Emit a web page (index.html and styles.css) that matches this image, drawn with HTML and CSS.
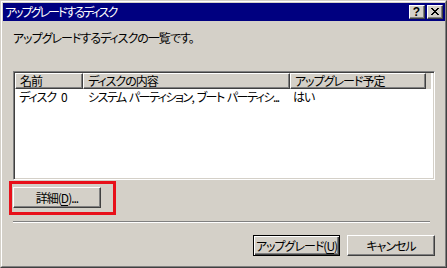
FILE: index.html
```html
<!DOCTYPE html>
<html lang="ja">
<head>
<meta charset="utf-8">
<link rel="stylesheet" href="styles.css">
</head>
<body>
<div class="window">
  <div class="titlebar">
    <span class="title">アップグレードするディスク</span>
    <div class="tbtns">
      <div class="tbtn help">?</div>
      <div class="tbtn">
        <svg width="8" height="7" viewBox="0 0 8 7"><path d="M0 0h2v1h1v1h2v-1h1v-1h2v1h-1v1h-1v1h-1v1h1v1h1v1h1v1h-2v-1h-1v-1h-2v1h-1v1h-2v-1h1v-1h1v-1h1v-1h-1v-1h-1v-1h-1z" fill="#000"/></svg>
      </div>
    </div>
  </div>
  <div class="content">
    <p class="desc">アップグレードするディスクの一覧です。</p>
    <div class="list">
      <div class="lhead">
        <div class="hc c1">名前</div>
        <div class="hc c2">ディスクの内容</div>
        <div class="hc c3">アップグレード予定</div>
      </div>
      <div class="lrow">
        <div class="rc c1">ディスク 0</div>
        <div class="rc c2">システム パーティション, ブート パーティシ...</div>
        <div class="rc c3">はい</div>
      </div>
    </div>
    <div class="detailwrap">
      <button class="btn detail">詳細(<u>D</u>)...</button>
      <div class="mark"></div>
    </div>
    <div class="sep"></div>
    <div class="actions">
      <button class="btn default">アップグレード(<u>U</u>)</button>
      <button class="btn">キャンセル</button>
    </div>
  </div>
</div>
</body>
</html>
```
FILE: styles.css
```css
* { box-sizing: border-box; }
html, body { margin: 0; padding: 0; background: #d4d0c8; }
body {
  font-family: "Noto Sans CJK JP", "Noto Sans", sans-serif;
  font-size: 12px;
  font-feature-settings: "palt";
  letter-spacing: -1px;
  word-spacing: 3px;
  color: #000;
}
.window {
  width: 447px;
  height: 268px;
  border: 1px solid;
  border-color: #d4d0c8 #404040 #404040 #d4d0c8;
  background: #d4d0c8;
  position: relative;
}
.window::before {
  content: "";
  position: absolute;
  inset: 0;
  border: 1px solid;
  border-color: #fff #808080 #808080 #fff;
  pointer-events: none;
}
.titlebar {
  margin: 2px 1px 0 2px;
  height: 18px;
  background: #000080;
  display: flex;
  align-items: center;
  justify-content: space-between;
  padding: 0 2px 0 2px;
}
.title {
  color: #fff;
  line-height: 18px;
  letter-spacing: -2px;
}
.tbtns { display: flex; gap: 2px; }
.tbtn {
  width: 16px;
  height: 14px;
  background: #d4d0c8;
  border: 1px solid;
  border-color: #fff #404040 #404040 #fff;
  box-shadow: inset -1px -1px 0 #808080;
  display: flex;
  align-items: center;
  justify-content: center;
  padding-bottom: 1px;
}
.tbtn.help {
  font-family: "Liberation Sans", sans-serif;
  font-weight: bold;
  font-size: 12px;
  letter-spacing: 0;
  line-height: 12px;
  padding: 0 1px 0 0;
}
.content {
  padding: 0 11px 0 12px;
  display: flex;
  flex-direction: column;
}
.desc {
  margin: 10px 0 0 0;
  line-height: 14px;
  height: 14px;
}
.list {
  margin-top: 26px;
  height: 109px;
  background: #fff;
  border: 1px solid;
  border-color: #808080 #fff #fff #808080;
  box-shadow: inset 1px 1px 0 #404040, inset -1px -1px 0 #d4d0c8;
  padding: 1px;
}
.lhead {
  display: flex;
  height: 16px;
  background: #d4d0c8;
  margin-right: 2px;
}
.hc {
  height: 16px;
  line-height: 13px;
  border: 1px solid;
  border-color: #fff #404040 #404040 #fff;
  box-shadow: inset -1px -1px 0 #808080;
  padding-left: 4px;
  white-space: nowrap;
}
.c1 { width: 68px; flex: none; }
.c2 { width: 207px; flex: none; }
.c3 { width: 136px; flex: none; }
.lrow { display: flex; height: 14px; padding-top: 1px; }
.rc {
  line-height: 13px;
  padding-left: 4px;
  white-space: nowrap;
}
.rc.c2 { padding-left: 5px; letter-spacing: -1.5px; word-spacing: 2px; }
.rc.c3 { padding-left: 3px; }
.btn {
  font: inherit;
  font-feature-settings: "palt";
  letter-spacing: -1px;
  white-space: nowrap;
  height: 21px;
  background: #d4d0c8;
  border: 1px solid;
  border-color: #fff #404040 #404040 #fff;
  box-shadow: inset -1px -1px 0 #808080;
  padding: 0;
  color: #000;
  line-height: 17px;
}
.btn u { text-decoration-thickness: 1px; text-underline-offset: 2px; }
.detailwrap {
  position: relative;
  margin-top: 7px;
  width: 88px;
}
.detail { width: 88px; }
.mark {
  position: absolute;
  left: -4px;
  top: -6px;
  width: 107px;
  height: 34px;
  border: 3px solid #e8101a;
}
.sep {
  margin-top: 13px;
  height: 2px;
  border-top: 1px solid #808080;
  border-bottom: 1px solid #fff;
  margin-right: 5px;
}
.actions {
  margin-top: 12px;
  display: flex;
  justify-content: flex-end;
  gap: 7px;
}
.actions .btn { width: 88px; }
.btn.default {
  width: 87px;
  border: 1px solid #000;
  box-shadow: inset 1px 1px 0 #fff, inset -1px -1px 0 #404040, inset -2px -2px 0 #808080;
}
```
